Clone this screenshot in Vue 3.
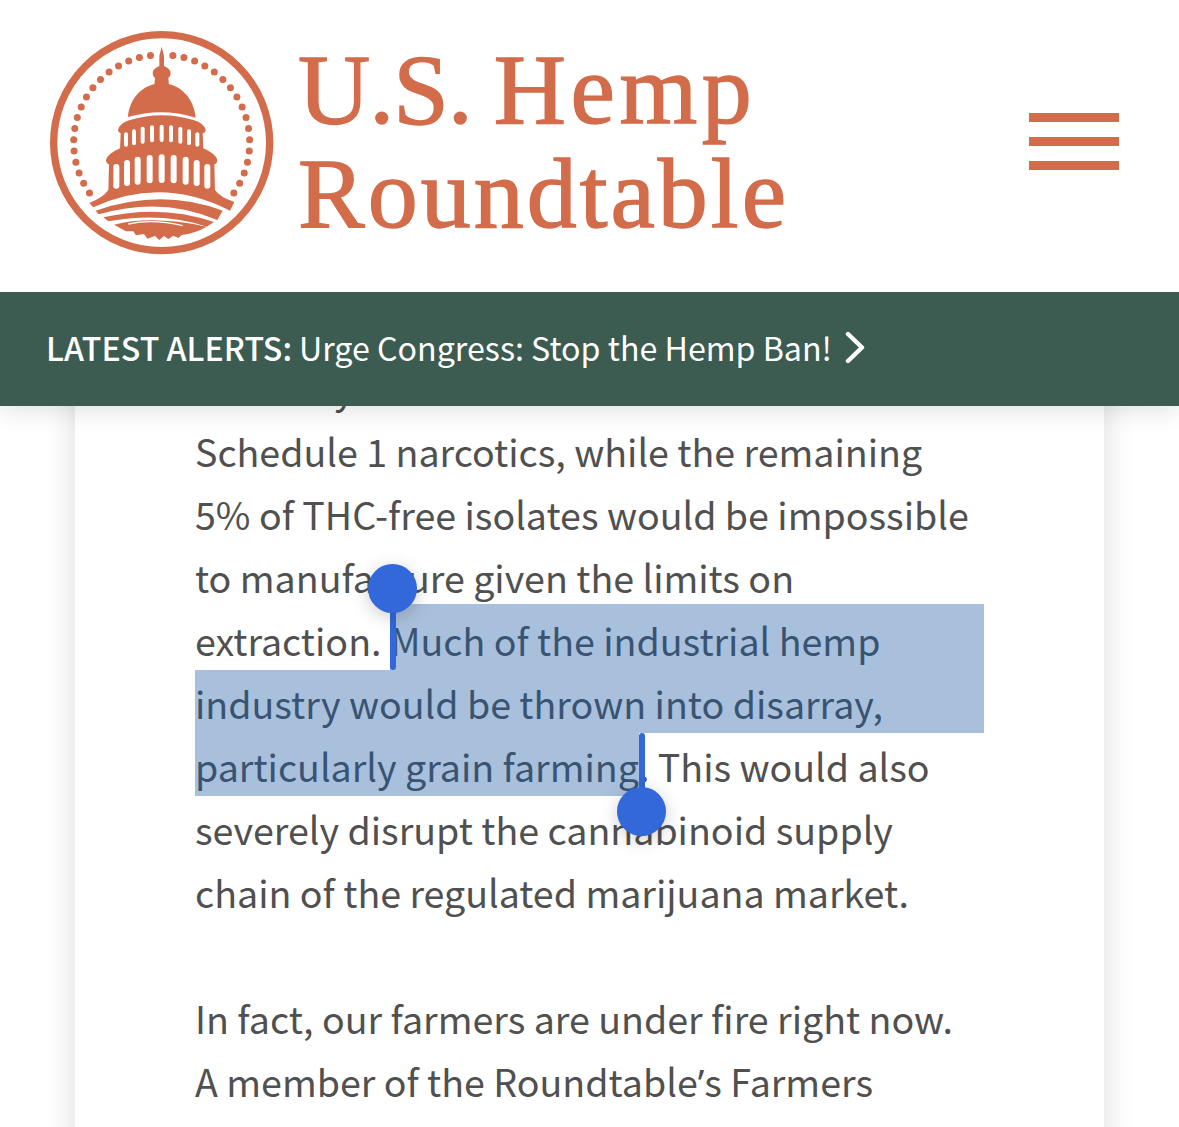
<template>
  <div class="page">
    <header class="site-header">
      <a class="brand">
        <svg class="logo" viewBox="0 0 750 735" aria-label="U.S. Hemp Roundtable seal">
          <circle cx="365" cy="368" r="324" fill="none" stroke="#d26c4a" stroke-width="22" />
          <circle v-for="(d, i) in dots" :key="i" :cx="d.x" :cy="d.y" r="10.5" fill="#d26c4a" />
          <g fill="#d26c4a">
            <!-- spire and lantern -->
            <path d="M365 80 L372 108 L372 138 Q392 146 392 160 Q392 170 385 174 L387 196 L343 196 L345 174 Q338 170 338 160 Q338 146 358 138 L358 108 Z" />
            <!-- dome -->
            <path d="M264 291 C268 235 310 190 365 190 C420 190 462 235 467 293 Q365 262 264 291 Z" />
            <!-- upper drum -->
            <path d="M234 330 Q238 310 270 300 Q365 272 460 300 Q493 310 497 330 Q497 338 488 340 L490 390 L240 390 L242 340 Q234 338 234 330 Z" />
            <!-- lower drum -->
            <path d="M198 420 Q202 402 240 385 Q365 350 490 385 Q528 402 532 420 Q532 430 523 433 L525 515 L205 515 L207 433 Q198 430 198 420 Z" />
            <!-- skirt -->
            <path d="M148 549 Q190 532 205 510 Q365 470 525 510 Q540 532 583 546 L570 572 Q365 467 160 562 Z" />
            <path d="M167 572 Q365 504 548 572 L532 600 Q365 528 176 583 Z" />
            <path d="M190 592 Q365 552 522 606 L500 620 Q365 575 205 604 Z" />
            <!-- leaf -->
            <path d="M222 614 Q335 585 500 620 Q465 640 425 645 L415 654 L400 647 L385 657 L372 648 L358 660 L345 648 L322 656 L312 642 L288 646 L280 634 L258 634 Z" />
          </g>
          <path d="M265 612 Q340 596 428 617" fill="none" stroke="#fff" stroke-width="4" />
          <g fill="#fff">
            <rect v-for="c in upperCols" :key="c.x" :x="c.x - 6" :y="c.y" width="12" :height="c.b - c.y" rx="6" />
            <rect v-for="c in lowerCols" :key="c.x" :x="c.x - 9" :y="c.y" width="18" :height="c.h" rx="9" />
          </g>
        </svg>
        <span class="brand-name">
          <span class="title-line"><span class="word-us">U.S.</span> <span class="word-hemp">Hemp</span></span>
          <span class="title-line word-round">Roundtable</span>
        </span>
      </a>
      <button class="menu-btn" type="button" aria-label="Menu">
        <span></span><span></span><span></span>
      </button>
    </header>

    <div class="alert-bar">
      <strong>LATEST ALERTS:</strong>
      <span class="alert-text">Urge Congress: Stop the Hemp Ban!</span>
      <svg class="chevron" viewBox="0 0 20 33" width="20" height="33">
        <path d="M3 3 L17 16.5 L3 30" fill="none" stroke="#fff" stroke-width="4.4" stroke-linecap="round" stroke-linejoin="round" />
      </svg>
    </div>

    <main class="content">
      <article class="card">
        <div class="line">currently classified as</div>
        <div class="line">Schedule 1 narcotics, while the remaining</div>
        <div class="line">5% of THC-free isolates would be impossible</div>
        <div class="line">to manufacture given the limits on</div>
        <div class="line row">
          <span>extraction.&nbsp;</span>
          <span class="sel sel-first"><i class="handle handle-start"></i>Much of the industrial hemp</span>
        </div>
        <div class="line row"><span class="sel">industry would be thrown into disarray,</span></div>
        <div class="line row">
          <span class="sel sel-last">particularly grain farming<i class="handle handle-end"></i></span>
          <span>.&nbsp;This would also</span>
        </div>
        <div class="line">severely disrupt the cannabinoid supply</div>
        <div class="line">chain of the regulated marijuana market.</div>
        <div class="line">&nbsp;</div>
        <div class="line">In fact, our farmers are under fire right now.</div>
        <div class="line">A member of the Roundtable<span class="apos">’</span>s Farmers</div>
      </article>
    </main>
  </div>
</template>

<script setup>
// dots run round the seal, with a gap for the spire and for the hills
const dots = []
for (let i = 0; i < 17; i++) {
  const a = ((7.3 + i * 7.35) * Math.PI) / 180
  dots.push({ x: 365 + 264 * Math.sin(a), y: 368 - 264 * Math.cos(a) })
  dots.push({ x: 365 - 264 * Math.sin(a), y: 368 - 264 * Math.cos(a) })
}

const upperCols = [
  { x: 258, y: 337, b: 380 },
  { x: 282, y: 328, b: 376 },
  { x: 308, y: 320, b: 371 },
  { x: 336, y: 316, b: 367 },
  { x: 365, y: 314, b: 366 },
  { x: 393, y: 316, b: 367 },
  { x: 421, y: 320, b: 371 },
  { x: 447, y: 328, b: 376 },
  { x: 472, y: 337, b: 380 },
]
const lowerCols = [
  { x: 229, y: 432, h: 74 },
  { x: 261, y: 420, h: 78 },
  { x: 293, y: 410, h: 84 },
  { x: 329, y: 405, h: 85 },
  { x: 365, y: 403, h: 86 },
  { x: 401, y: 405, h: 85 },
  { x: 437, y: 410, h: 84 },
  { x: 470, y: 420, h: 78 },
  { x: 502, y: 432, h: 74 },
]
</script>

<style scoped>
.page {
  height: 1127px;
  overflow: hidden;
  background: #fff;
  font-family: "Noto Sans CJK SC", "Noto Sans", sans-serif;
}

.site-header {
  position: relative;
  z-index: 3;
  height: 292px;
  box-sizing: border-box;
  padding: 20px 60px 0 40px;
  display: flex;
  justify-content: space-between;
  background: #fff;
}

.brand {
  display: flex;
  align-items: flex-start;
}

.logo {
  width: 250px;
  height: 245px;
  flex: none;
}

.brand-name {
  margin: 18px 0 0 8px;
  font-family: "Liberation Serif", serif;
  font-size: 100px;
  line-height: 104px;
  color: #d26c4a;
  -webkit-text-stroke: 1.4px #d26c4a;
  white-space: nowrap;
}

.title-line {
  display: block;
  word-spacing: -3px;
}

.word-us {
  letter-spacing: -1px;
}

.word-hemp {
  letter-spacing: 4.5px;
}

.word-round {
  letter-spacing: 3px;
}

.menu-btn {
  display: flex;
  flex-direction: column;
  gap: 15px;
  width: 90px;
  margin-top: 93px;
  padding: 0;
  border: 0;
  background: none;
}

.menu-btn span {
  display: block;
  height: 9px;
  background: #d26c4a;
}

.alert-bar {
  position: relative;
  z-index: 2;
  height: 114px;
  box-sizing: border-box;
  padding: 0 0 4px 46px;
  display: flex;
  align-items: center;
  background: #3c5b51;
  color: #fff;
  font-size: 32.2px;
  box-shadow: 0 4px 24px rgba(0, 0, 0, 0.12);
  white-space: nowrap;
}

.alert-bar strong {
  font-weight: 500;
}

.alert-text {
  margin-left: 7px;
}

.chevron {
  margin-left: 13px;
}

/* clips the article where it scrolls under the alert bar */
.content {
  height: 721px;
  overflow: hidden;
  padding: 0 75px;
}

.card {
  box-sizing: border-box;
  height: 900px;
  margin-top: -106px;
  padding: 55px 120px 0;
  background: #fff;
  box-shadow: 0 0 30px rgba(0, 0, 0, 0.14);
  color: #505050;
  font-size: 37.6px;
  line-height: 65px;
}

.line {
  height: 63px;
  white-space: nowrap;
}

.apos {
  font-family: "Noto Sans", sans-serif;
}

.row {
  display: flex;
}

.sel {
  position: relative;
  flex: 1;
  background: #a9c0dc;
  color: #385472;
}

.sel-first {
  box-shadow: 0 -3px 0 #a9c0dc;
}

.sel-last {
  flex: none;
}

.handle {
  position: absolute;
  width: 6px;
  background: #3268d9;
  border-radius: 3px;
}

.handle::before {
  content: "";
  position: absolute;
  left: 50%;
  width: 49px;
  height: 49px;
  margin-left: -24.5px;
  border-radius: 50%;
  background: #3268d9;
  box-shadow: 0 4px 18px rgba(0, 0, 0, 0.2);
}

.handle-start {
  left: 0;
  top: -3px;
  height: 66px;
}

.handle-start::before {
  top: -40px;
}

.handle-end {
  right: -6px;
  top: 0;
  height: 66px;
}

.handle-end::before {
  top: 54px;
}
</style>

<style>
html,
body {
  margin: 0;
  background: #fff;
}
</style>
